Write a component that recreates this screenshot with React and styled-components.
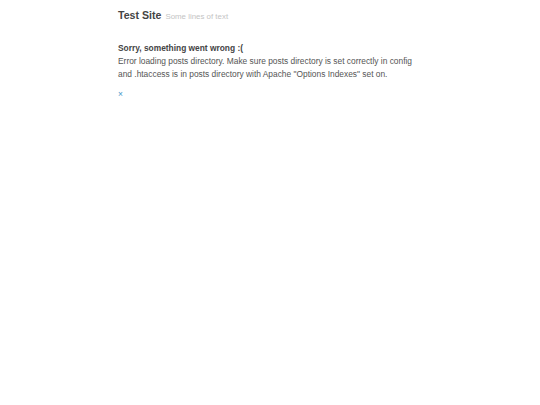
import React from "react";
import styled, { createGlobalStyle } from "styled-components";

const GlobalStyle = createGlobalStyle`
  html, body {
    margin: 0;
    padding: 0;
    background: #ffffff;
  }
  body {
    font-family: "Liberation Sans", Arial, sans-serif;
  }
`;

const Page = styled.div`
  max-width: 304px;
  margin: 0 auto;
  padding-top: 8px;
`;

const Header = styled.header`
  display: flex;
  align-items: baseline;
  gap: 4px;
`;

const Title = styled.h1`
  margin: 0;
  font-size: 10.6px;
  font-weight: bold;
  color: #444444;
  line-height: 14px;
`;

const Subtitle = styled.span`
  font-size: 7.9px;
  color: #c4c4c4;
`;

const Error = styled.section`
  margin-top: 20px;
  color: #555555;
  font-size: 8.4px;
  line-height: 13px;
`;

const ErrorTitle = styled.h2`
  margin: 0;
  font-size: 8.4px;
  font-weight: bold;
  color: #444444;
  line-height: 13px;
`;

const ErrorText = styled.p`
  margin: 0;
`;

const Close = styled.a`
  display: inline-block;
  margin-top: 7px;
  font-size: 8.4px;
  color: #3b8fc7;
  text-decoration: none;
  line-height: 13px;
`;

export default function App() {
  return (
    <>
      <GlobalStyle />
      <Page>
        <Header>
          <Title>Test Site</Title>
          <Subtitle>Some lines of text</Subtitle>
        </Header>
        <Error>
          <ErrorTitle>Sorry, something went wrong :(</ErrorTitle>
          <ErrorText>
            Error loading posts directory. Make sure posts directory is set
            correctly in config and .htaccess is in posts directory with Apache
            "Options Indexes" set on.
          </ErrorText>
          <Close href="#">×</Close>
        </Error>
      </Page>
    </>
  );
}
